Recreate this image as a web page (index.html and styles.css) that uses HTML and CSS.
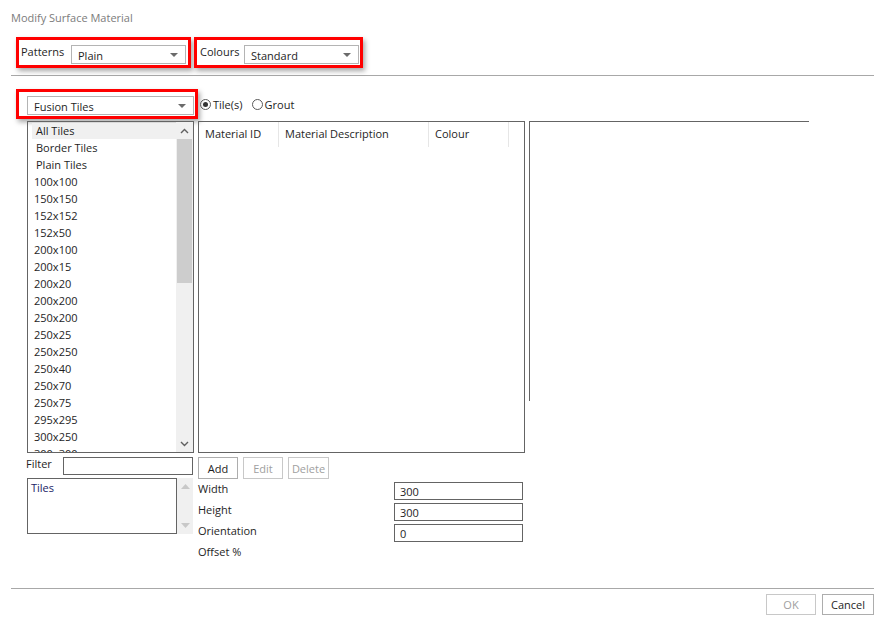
FILE: index.html
```html
<!DOCTYPE html>
<html lang="en">
<head>
  <meta charset="UTF-8">
  <title>Modify Surface Material</title>
  <link rel="stylesheet" href="styles.css">
</head>
<body>

  <div class="dialog">
    <div class="title">Modify Surface Material</div>

    <!-- Patterns / Colours -->
    <div class="top-row">
      <div class="frame frame-patterns">
        <span class="label">Patterns</span>
        <div class="combo combo-short">
          <span>Plain</span>
          <svg class="arrow" width="8" height="4" viewBox="0 0 8 4"><path d="M0 0 H8 L4 4 Z"/></svg>
        </div>
      </div>
      <div class="frame frame-colours">
        <span class="label">Colours</span>
        <div class="combo combo-short">
          <span>Standard</span>
          <svg class="arrow" width="8" height="4" viewBox="0 0 8 4"><path d="M0 0 H8 L4 4 Z"/></svg>
        </div>
      </div>
    </div>

    <div class="rule"></div>

    <div class="type-row">
      <div class="frame frame-type">
        <div class="combo combo-long">
          <span>Fusion Tiles</span>
          <svg class="arrow" width="8" height="4" viewBox="0 0 8 4"><path d="M0 0 H8 L4 4 Z"/></svg>
        </div>
      </div>
      <div class="radio"><span class="dot on"></span>Tile(s)</div>
      <div class="radio"><span class="dot"></span>Grout</div>
    </div>

    <!-- Lista, tabla y vista previa -->
    <div class="main">
      <div class="list">
        <div class="list-items">
          <div class="item item-group selected">All Tiles</div>
          <div class="item item-group">Border Tiles</div>
          <div class="item item-group">Plain Tiles</div>
          <div class="item">100x100</div>
          <div class="item">150x150</div>
          <div class="item">152x152</div>
          <div class="item">152x50</div>
          <div class="item">200x100</div>
          <div class="item">200x15</div>
          <div class="item">200x20</div>
          <div class="item">200x200</div>
          <div class="item">250x200</div>
          <div class="item">250x25</div>
          <div class="item">250x250</div>
          <div class="item">250x40</div>
          <div class="item">250x70</div>
          <div class="item">250x75</div>
          <div class="item">295x295</div>
          <div class="item">300x250</div>
          <div class="item">300x300</div>
        </div>
        <div class="scrollbar">
          <div class="scroll-btn">
            <svg width="9" height="6" viewBox="0 0 9 6"><polyline points="1,5 4.5,1.5 8,5"/></svg>
          </div>
          <div class="thumb"></div>
          <div class="scroll-space"></div>
          <div class="scroll-btn">
            <svg width="9" height="6" viewBox="0 0 9 6"><polyline points="1,1 4.5,4.5 8,1"/></svg>
          </div>
        </div>
      </div>

      <div class="grid">
        <div class="grid-head">
          <div class="col col-id">Material ID</div>
          <div class="col col-desc">Material Description</div>
          <div class="col col-colour">Colour</div>
        </div>
      </div>

      <div class="preview"></div>
    </div>

    <div class="lower">
      <div class="filter-col">
        <div class="filter-row">
          <span class="filter-label">Filter</span>
          <div class="input filter-input"></div>
        </div>
        <div class="tiles-box">
          <div class="tiles-list">Tiles</div>
          <div class="tiles-scroll">
            <svg width="9" height="5" viewBox="0 0 9 5"><path d="M0 5 L4.5 0 L9 5 Z"/></svg>
            <svg width="9" height="5" viewBox="0 0 9 5"><path d="M0 0 H9 L4.5 5 Z"/></svg>
          </div>
        </div>
      </div>

      <div class="data-col">
        <div class="buttons">
          <button class="btn">Add</button>
          <button class="btn" disabled>Edit</button>
          <button class="btn btn-delete" disabled>Delete</button>
        </div>
        <div class="fields">
          <span class="field-label">Width</span>
          <div class="input">300</div>
          <span class="field-label">Height</span>
          <div class="input">300</div>
          <span class="field-label">Orientation</span>
          <div class="input">0</div>
          <span class="field-label">Offset %</span>
          <div></div>
        </div>
      </div>
    </div>

    <div class="rule"></div>

    <div class="footer">
      <button class="btn btn-ok" disabled>OK</button>
      <button class="btn btn-cancel">Cancel</button>
    </div>
  </div>

</body>
</html>
```

FILE: styles.css
```css
:root {
  --borde-oscuro: #646464;
  --borde-claro: #b4b4b4;
  --rojo: #ff0000;
  --texto: #1e1e1e;
  --texto-gris: #a0a0a0;
  --scroll: #f0f0f0;
}

body {
  margin: 0;
  background: #fff;
  font-family: 'Open Sans', 'Noto Sans', sans-serif;
  font-size: 11px;
  color: var(--texto);
}

.dialog {
  width: 863px;
  padding: 0 18px 0 11px;
}

.title {
  padding-top: 10px;
  line-height: 16px;
  color: #7c7c7c;
}

/* MARCOS ROJOS */
.top-row {
  display: flex;
  gap: 3px;
  margin-top: 11px;
  padding-left: 5px;
}

.frame {
  display: flex;
  box-sizing: border-box;
  border: 3px solid var(--rojo);
  box-shadow: 2px 3px 5px rgba(0,0,0,0.35);
  background: #fff;
}

.frame-patterns {
  width: 175px;
  height: 31px;
  padding: 0 2px;
}

.frame-colours {
  width: 169px;
  height: 31px;
  padding: 0 1px 0 3px;
}

.frame-patterns .label {
  width: 50px;
}

.frame-colours .label {
  width: 44px;
}

.label {
  padding-top: 4px;
  line-height: 16px;
}

.combo {
  box-sizing: border-box;
  display: flex;
  align-items: center;
  justify-content: space-between;
  height: 19px;
  margin-top: 5px;
  padding: 1px 7px 0 6px;
  border: 1px solid var(--borde-claro);
  background: #fff;
}

.combo-short {
  width: 115px;
}

.arrow {
  fill: #6b6b6b;
}

.rule {
  height: 1px;
  margin-top: 7px;
  background: #a8a8a8;
}

.type-row {
  display: flex;
  align-items: center;
  margin-top: 13px;
  padding-left: 5px;
}

.frame-type {
  width: 182px;
  height: 30px;
  padding: 0 1px 0 8px;
  margin-right: 2px;
}

.combo-long {
  width: 167px;
  margin-top: 4px;
}

.radio {
  display: flex;
  align-items: center;
  gap: 2px;
  margin-right: 9px;
  padding-top: 1px;
  line-height: 16px;
}

.dot {
  box-sizing: border-box;
  width: 11px;
  height: 11px;
  border: 1px solid #5a5a5a;
  border-radius: 50%;
  position: relative;
}

.dot.on::after {
  content: '';
  position: absolute;
  left: 2px;
  top: 2px;
  width: 5px;
  height: 5px;
  border-radius: 50%;
  background: #333;
}

/* LISTA + TABLA */
.main {
  display: flex;
  gap: 4px;
  margin-top: 2px;
  padding-left: 16px;
  height: 332px;
  align-items: flex-start;
}

.list {
  box-sizing: border-box;
  display: flex;
  width: 167px;
  height: 332px;
  border: 1px solid var(--borde-oscuro);
  overflow: hidden;
}

.list-items {
  flex: 1;
  overflow: hidden;
}

.item {
  height: 17px;
  line-height: 17px;
  padding-left: 6px;
  white-space: nowrap;
}

.item-group {
  padding-left: 8px;
}

.selected {
  margin: 1px 0 0 4px;
  height: 16px;
  line-height: 15px;
  padding-left: 4px;
  background: #f0f0f0;
}

.scrollbar {
  display: flex;
  flex-direction: column;
  width: 17px;
  background: var(--scroll);
}

.scroll-btn {
  height: 17px;
  display: flex;
  align-items: center;
  justify-content: center;
}

.scroll-btn svg polyline {
  fill: none;
  stroke: #606060;
  stroke-width: 1.4;
}

.thumb {
  height: 144px;
  margin: 0 1px;
  background: #cdcdcd;
}

.scroll-space {
  flex: 1;
}

.grid {
  box-sizing: border-box;
  width: 327px;
  height: 332px;
  border: 1px solid var(--borde-oscuro);
}

.grid-head {
  display: flex;
  height: 25px;
}

.col {
  box-sizing: border-box;
  padding-left: 6px;
  line-height: 24px;
  border-right: 1px solid #e6e6e6;
}

.col-id {
  width: 80px;
}

.col-desc {
  width: 150px;
}

.col-colour {
  width: 80px;
}

.preview {
  width: 279px;
  height: 279px;
  border-top: 1px solid var(--borde-oscuro);
  border-left: 1px solid var(--borde-oscuro);
}

/* PARTE INFERIOR */
.lower {
  display: flex;
  margin-top: 4px;
  height: 124px;
}

.filter-col {
  width: 167px;
  padding-left: 15px;
}

.filter-row {
  display: flex;
  align-items: flex-start;
  height: 18px;
}

.filter-label {
  width: 37px;
  line-height: 14px;
}

.input {
  box-sizing: border-box;
  height: 18px;
  padding-left: 5px;
  line-height: 17px;
  border: 1px solid var(--borde-oscuro);
}

.filter-input {
  width: 130px;
}

.tiles-box {
  display: flex;
  margin: 3px 0 0 1px;
  height: 56px;
}

.tiles-list {
  box-sizing: border-box;
  width: 150px;
  padding: 1px 0 0 3px;
  line-height: 16px;
  color: #1a2466;
  border: 1px solid var(--borde-oscuro);
}

.tiles-scroll {
  width: 16px;
  display: flex;
  flex-direction: column;
  justify-content: space-between;
  align-items: center;
  padding: 6px 0 6px;
  box-sizing: border-box;
  background: var(--scroll);
}

.tiles-scroll svg {
  fill: #c8c8c8;
}

.data-col {
  width: 327px;
  margin-left: 5px;
}

.buttons {
  display: flex;
  gap: 5px;
}

.btn {
  box-sizing: border-box;
  height: 22px;
  padding: 0;
  font-family: inherit;
  font-size: 11px;
  color: var(--texto);
  background: #fff;
  border: 1px solid #adadad;
}

.buttons .btn {
  width: 40px;
}

.buttons .btn-delete {
  width: 41px;
}

.btn:disabled {
  color: var(--texto-gris);
  border-color: #c8c8c8;
}

.fields {
  display: grid;
  grid-template-columns: 196px 129px;
  grid-auto-rows: 18px;
  row-gap: 3px;
  margin-top: 3px;
}

.field-label {
  margin-top: -1px;
  line-height: 16px;
}

.footer {
  display: flex;
  justify-content: flex-end;
  gap: 6px;
  margin-top: 5px;
}

.footer .btn {
  height: 21px;
}

.btn-ok {
  width: 50px;
}

.btn-cancel {
  width: 52px;
}
```
